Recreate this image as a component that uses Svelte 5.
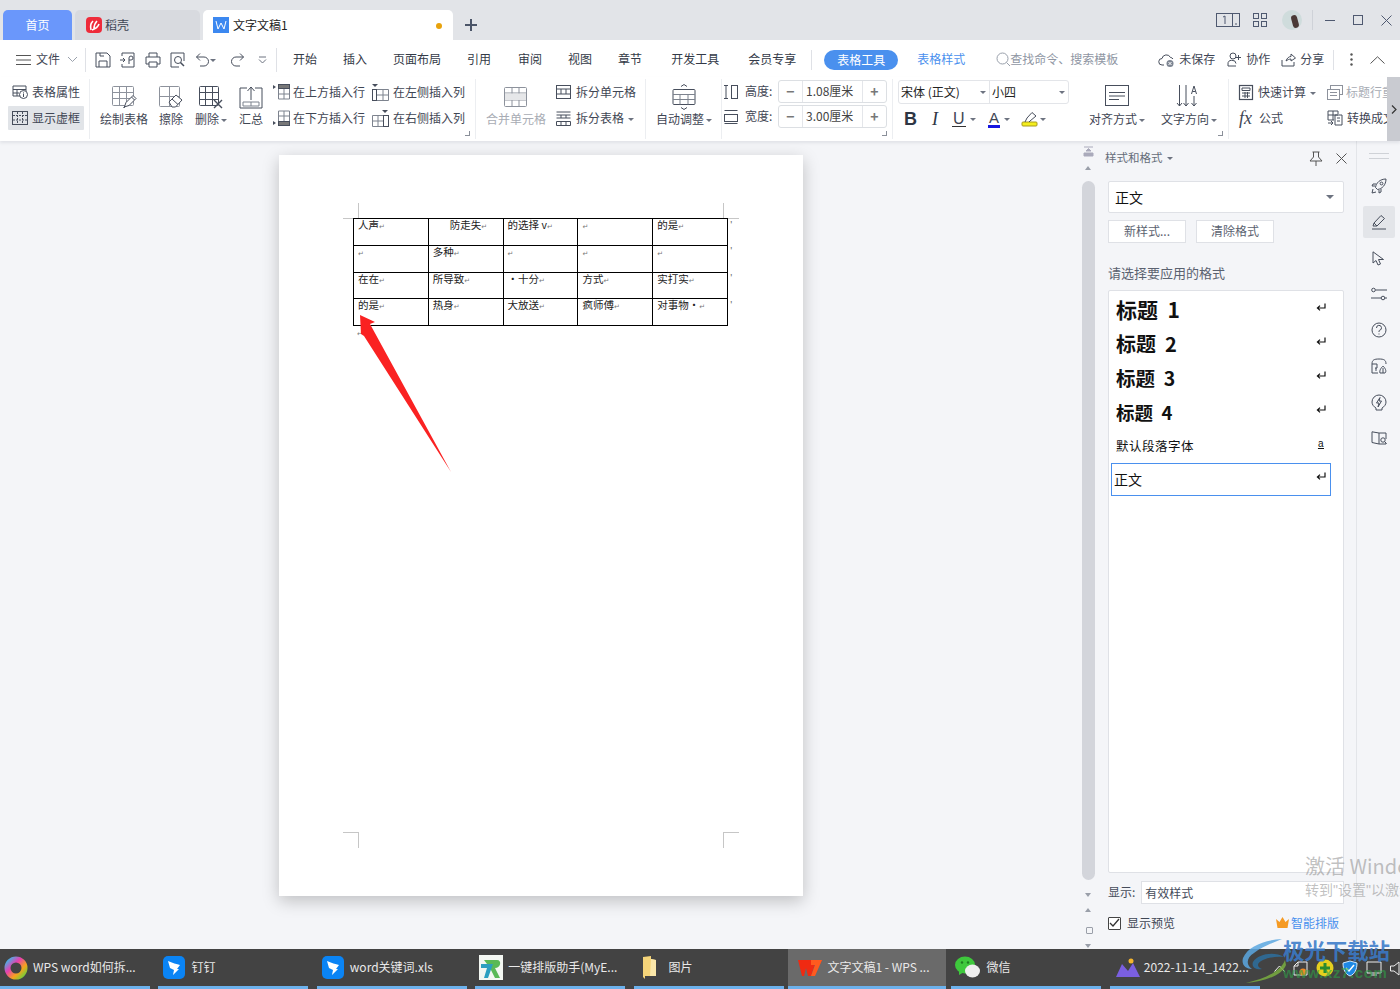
<script>
  const tabs = [
    ["开始", 0], ["插入", 26], ["页面布局", 26], ["引用", 26], ["审阅", 27],
    ["视图", 26], ["章节", 26], ["开发工具", 29], ["会员专享", 29]
  ];
  const rows = [
    [["人声", 0], ["防走失", 1], ["的选择 v", 0], ["", 0], ["的是", 0]],
    [["", 0], ["多种", 0], ["", 0], ["", 0], ["", 0]],
    [["在在", 0], ["所导致", 0], ["·十分", 0], ["方式", 0], ["实打实", 0]],
    [["的是", 0], ["热身", 0], ["大放送", 0], ["疯师傅", 0], ["对事物·", 0]]
  ];
  const styles = [
    { name: "标题", num: "1", cls: "h1" },
    { name: "标题", num: "2", cls: "h2" },
    { name: "标题", num: "3", cls: "h3" },
    { name: "标题", num: "4", cls: "h4" }
  ];
  const tasks = [
    { label: "WPS word如何拆...", icon: "wheel" },
    { label: "钉钉", icon: "ding" },
    { label: "word关键词.xls", icon: "ding" },
    { label: "一键排版助手(MyE...", icon: "r" },
    { label: "图片", icon: "folder" },
    { label: "文字文稿1 - WPS ...", icon: "wps", active: true },
    { label: "微信", icon: "wechat" }
  ];
</script>

{#snippet grid(x, y, w, h, cx, cy)}
  <rect {x} {y} width={w} height={h} rx="1" />
  {#each cx as c}<path d="M{c} {y}V{y + h}" />{/each}
  {#each cy as c}<path d="M{x} {c}H{x + w}" />{/each}
{/snippet}

{#snippet ret()}
  <svg class="ret" width="10" height="9" viewBox="0 0 10 9"><path d="M9 0.5V5H2M4 2.6L1.4 5L4 7.4" /></svg>
{/snippet}

<div class="app">
  <header class="tabbar">
    <div class="tab home">首页</div>
    <div class="tab shell">
      <svg width="16" height="16" viewBox="0 0 16 16"><rect width="16" height="16" rx="4" fill="#ee2b3a" stroke="none" /><path d="M5 13C4 9 5 6 7 4M8 12C8 9 9 6 11 4M6 13C9 12 12 10 13 7" stroke="#fff" stroke-width="1.6" /></svg>
      <span>稻壳</span>
    </div>
    <div class="tab doc">
      <svg width="16" height="16" viewBox="0 0 16 16"><rect width="16" height="16" fill="#3c88f0" stroke="none" /><path d="M3 4L5 12L8 6L11 12L13 4" stroke="#fff" /></svg>
      <span>文字文稿1</span>
      <i class="dot"></i>
    </div>
    <svg class="plus" width="14" height="14" viewBox="0 0 14 14"><path d="M7 1V13M1 7H13" stroke-width="2" stroke="#4b5568" /></svg>
    <div class="winctl">
      <svg width="24" height="14" viewBox="0 0 24 14"><rect x="0.5" y="0.5" width="23" height="13" /><path d="M16.5 0.5V13.5M19 11H21" /><path d="M7 4L9 3V11" /></svg>
      <svg class="apps" width="14" height="14" viewBox="0 0 14 14"><rect x="0.5" y="0.5" width="5" height="5" /><rect x="8.5" y="0.5" width="5" height="5" /><rect x="0.5" y="8.5" width="5" height="5" /><rect x="8.5" y="8.5" width="5" height="5" /></svg>
      <div class="avatar"><i></i></div>
      <b class="vr"></b>
      <svg class="min" width="10" height="11" viewBox="0 0 10 11"><path d="M0 5.5H10" /></svg>
      <svg class="max" width="10" height="10" viewBox="0 0 10 10"><rect x="0.5" y="0.5" width="9" height="9" /></svg>
      <svg class="cls" width="11" height="11" viewBox="0 0 11 11"><path d="M0.5 0.5L10.5 10.5M10.5 0.5L0.5 10.5" /></svg>
    </div>
  </header>

  <nav class="menu">
    <svg class="burger" width="16" height="12" viewBox="0 0 16 12"><path d="M0 1.5H15M0 6H15M0 10.5H15" /></svg>
    <span class="file">文件</span>
    <svg class="chev" width="11" height="7" viewBox="0 0 11 7"><path d="M1 1L5.5 5.5L10 1" stroke="#9aa1ac" /></svg>
    <b class="vr v1"></b>
    <div class="qa">
      <svg width="16" height="16" viewBox="0 0 16 16"><path d="M1 1H12L15 4V15H1ZM4 15V9H12V15M5 1V4H9" /></svg>
    </div>
    <div class="qa">
      <svg width="17" height="16" viewBox="0 0 17 16"><path d="M3 4V1H15V15H3V12M1 8H6M4 6L6 8L4 10M10 12V6A2 2 0 1 1 12 8H10" /></svg>
    </div>
    <div class="qa">
      <svg width="16" height="16" viewBox="0 0 16 16"><path d="M4 5V1H12V5M4 12H1V5H15V12H12M4 10H12V15H4Z" /></svg>
    </div>
    <div class="qa">
      <svg width="16" height="16" viewBox="0 0 16 16"><path d="M14 9V1H1V15H9" /><circle cx="8" cy="8" r="3.5" /><path d="M10.5 10.5L14 14" stroke-width="1.5" /></svg>
    </div>
    <div class="qa undo">
      <svg width="15" height="14" viewBox="0 0 15 14"><path d="M5 0.5L1.5 4L5 7.5M1.5 4H9A4.5 4.5 0 0 1 9 13H5" /></svg>
      <i class="caret"></i>
    </div>
    <div class="qa redo">
      <svg width="15" height="14" viewBox="0 0 15 14"><path d="M10 0.5L13.5 4L10 7.5M13.5 4H6A4.5 4.5 0 0 0 6 13H10" /></svg>
    </div>
    <div class="qa more">
      <svg width="9" height="8" viewBox="0 0 9 8"><path d="M1 1H8M1 3.5L4.5 7L8 3.5" /></svg>
    </div>
    <b class="vr v2"></b>
    <div class="mtabs">
      {#each tabs as [t, m]}
        <span style:margin-left="{m}px">{t}</span>
      {/each}
    </div>
    <b class="vr v3"></b>
    <span class="pill">表格工具</span>
    <span class="link">表格样式</span>
    <div class="search">
      <svg width="15" height="15" viewBox="0 0 15 15"><circle cx="6.5" cy="6.5" r="5.5" /><path d="M10.5 10.5L14 14" /></svg>
      <span>查找命令、搜索模板</span>
    </div>
    <div class="act a1">
      <svg width="19" height="16" viewBox="0 0 19 16"><path d="M6 13H4A3 3 0 0 1 4 6.5A4.5 4.5 0 0 1 12.5 5.5A3 3 0 0 1 15 7" /><circle cx="12" cy="11.5" r="3.5" fill="#7d8592" stroke="none" /><path d="M10.5 10L13.5 13M13.5 10L10.5 13" stroke="#fff" /></svg>
      <span>未保存</span>
    </div>
    <div class="act a2">
      <svg width="15" height="15" viewBox="0 0 15 15"><circle cx="6" cy="4" r="3" /><path d="M1 14V12A4 3.5 0 0 1 9 11.5M1 14H9M11.5 3V8M9 5.5H14" /></svg>
      <span>协作</span>
    </div>
    <div class="act a3">
      <svg width="15" height="15" viewBox="0 0 15 15"><path d="M1 8V14H13V10M5 9C6 6 8 4.5 10 4.5V2L14.5 6L10 9V7C8 7 6.5 8 5 9Z" /></svg>
      <span>分享</span>
    </div>
    <b class="vr v4"></b>
    <svg class="dots" width="3" height="13" viewBox="0 0 3 13"><circle cx="1.5" cy="1.5" r="1.2" fill="#555" stroke="none" /><circle cx="1.5" cy="6.5" r="1.2" fill="#555" stroke="none" /><circle cx="1.5" cy="11.5" r="1.2" fill="#555" stroke="none" /></svg>
    <svg class="collapse" width="15" height="8" viewBox="0 0 15 8"><path d="M0.5 7.5L7.5 0.8L14.5 7.5" /></svg>
  </nav>

  <section class="ribbon">
    <div class="rg g1">
      <div class="smalls">
        <div class="sm">
          <svg width="16" height="14" viewBox="0 0 16 14"><path d="M8 11H1V1H14V6M1 4.5H14M5 4.5V11M1 8H7" /><circle cx="11.5" cy="9.5" r="4" /><path d="M11.5 8.5V12M11.5 6.8V7.6" /></svg>
          <span>表格属性</span>
        </div>
        <div class="sm on">
          <svg width="16" height="14" viewBox="0 0 16 14"><rect x="0.5" y="0.5" width="15" height="13" /><path d="M1 4.5H15M1 9H15M5.5 1V13M10.5 1V13" stroke-dasharray="2 1" /></svg>
          <span>显示虚框</span>
        </div>
      </div>
    </div>

    <div class="rg g2">
      <div class="big" style:width="48px">
        <svg width="24" height="24" viewBox="0 0 24 24" class="soft">
          {@render grid(0.5, 1.5, 21, 19, [7.5, 14.5], [7.5, 13.5])}
          <path class="dk" d="M12 23L14 17.5L21 10.5L24 13.5L17 20.5L12 22ZM19.5 12L22.5 15" />
        </svg>
        <span>绘制表格</span>
      </div>
      <div class="big" style:width="24px">
        <svg width="25" height="24" viewBox="0 0 25 24" class="soft">
          {@render grid(0.5, 1.5, 20, 20, [10.5], [11.5])}
          <path class="dk" d="M10 17L17 10L23 15L16.5 22H13ZM13 14L19 19.5" />
        </svg>
        <span>擦除</span>
      </div>
      <div class="big" style:width="34px">
        <svg width="24" height="24" viewBox="0 0 24 24">
          {@render grid(0.5, 1.5, 19, 19, [6.5, 13.5], [7.5, 14.5])}
          <path d="M15 15L23 23M23 15L15 23" fill="#fff" stroke-width="1.4" />
        </svg>
        <span>删除<i class="caret"></i></span>
      </div>
      <div class="big" style:width="24px">
        <svg width="24" height="24" viewBox="0 0 24 24">
          <path d="M8 3H1V23H23V3H16M12 15V2M8.5 6L12 2L15.5 6" />
          <path class="soft2" d="M4 17H20V21H4ZM12 17V21" />
        </svg>
        <span>汇总</span>
      </div>
      <div class="smalls c1">
        <div class="sm">
          <svg width="17" height="16" viewBox="0 0 17 16"><path class="fl" d="M0 1L3 3L0 5Z" /><rect x="5.5" y="0.5" width="11" height="4" fill="#777" /><path d="M5.5 5V15H16.5V5M11 5V15M5.5 10H16.5" class="soft2" /></svg>
          <span>在上方插入行</span>
        </div>
        <div class="sm">
          <svg width="17" height="16" viewBox="0 0 17 16"><path class="fl" d="M0 11L3 13L0 15Z" /><rect x="5.5" y="11.5" width="11" height="4" fill="#777" /><path d="M5.5 11V1H16.5V11M11 1V11M5.5 6H16.5" class="soft2" /></svg>
          <span>在下方插入行</span>
        </div>
      </div>
      <div class="smalls c2">
        <div class="sm">
          <svg width="17" height="17" viewBox="0 0 17 17"><path class="fl" d="M0 0H6L3 3Z" /><rect x="0.5" y="5.5" width="4" height="11" /><path d="M5 5.5H16.5V16.5H5M11 5.5V16.5M5 11H16.5" class="soft2" /></svg>
          <span>在左侧插入列</span>
        </div>
        <div class="sm">
          <svg width="17" height="17" viewBox="0 0 17 17"><path class="fl" d="M10 0H16L13 3Z" /><rect x="11.5" y="5.5" width="5" height="11" /><path d="M11 5.5H0.5V16.5H11M6 5.5V16.5M1 11H11" class="soft2" /></svg>
          <span>在右侧插入列</span>
        </div>
      </div>
      <i class="launch"></i>
    </div>

    <div class="rg g3">
      <div class="big off" style:width="60px">
        <svg width="24" height="24" viewBox="0 0 24 24" class="soft">
          {@render grid(0.5, 2.5, 22, 19, [8, 15], [8, 15])}
          <rect x="1" y="8.5" width="21" height="6.5" fill="#e6e7e9" stroke="none" />
        </svg>
        <span>合并单元格</span>
      </div>
      <div class="smalls c3">
        <div class="sm">
          <svg width="15" height="14" viewBox="0 0 15 14"><rect x="0.5" y="0.5" width="14" height="13" /><path d="M1 4H14M1 9H14M5 4V9M10 4V9" /></svg>
          <span>拆分单元格</span>
        </div>
        <div class="sm">
          <svg width="15" height="15" viewBox="0 0 15 15"><path d="M0.5 1H14.5M0.5 4H14.5M0.5 7H14.5M0.5 10.5H14.5V14.5H0.5ZM5 10.5V14.5M10 10.5V14.5M5 4V7M10 4V7" /></svg>
          <span>拆分表格<i class="caret"></i></span>
        </div>
      </div>
    </div>

    <div class="rg g4">
      <div class="big" style:width="58px">
        <svg width="24" height="26" viewBox="0 0 24 26">
          <path d="M9 2.5L12 0.5L15 2.5M9 23.5L12 25.5L15 23.5" />
          <rect x="1" y="5.5" width="22" height="15" rx="1" />
          <path class="soft2" d="M1 10.5H23M1 15.5H23M8 10.5V20.5M16 10.5V20.5" />
        </svg>
        <span>自动调整<i class="caret"></i></span>
      </div>
    </div>

    <div class="rg g5">
      <div class="dim">
        <svg width="14" height="14" viewBox="0 0 14 14"><path d="M0 0.5H4M0 13.5H4M2 0.5V13.5" /><rect x="7.5" y="0.5" width="6" height="13" /></svg>
        <span>高度:</span>
        <div class="step"><b>−</b><em>1.08厘米</em><b>+</b></div>
      </div>
      <div class="dim">
        <svg width="14" height="14" viewBox="0 0 14 14"><path d="M0.5 0.5H13.5" /><rect x="0.5" y="4.5" width="13" height="7" /><path d="M0.5 13.5H13.5" /></svg>
        <span>宽度:</span>
        <div class="step"><b>−</b><em>3.00厘米</em><b>+</b></div>
      </div>
      <i class="launch"></i>
    </div>

    <div class="rg g6">
      <div class="fontcol">
        <div class="fontsel">
          <div class="fn">宋体 (正文)<i class="caret"></i></div>
          <div class="fs">小四<i class="caret"></i></div>
        </div>
        <div class="fmts">
          <b class="bold">B</b>
          <i class="ital">I</i>
          <div class="fm u"><span>U</span><i class="caret"></i></div>
          <div class="fm col"><span>A</span><i class="caret"></i></div>
          <div class="fm hl">
            <svg width="16" height="16" viewBox="0 0 16 16"><rect x="0" y="11" width="15" height="4" rx="1" fill="#f4ee1c" stroke="#a79a1e" /><path d="M3 11L5 7L10 1.5L14 5L8 10L7 11" /></svg>
            <i class="caret"></i>
          </div>
        </div>
      </div>
      <div class="big al" style:width="58px">
        <svg width="24" height="24" viewBox="0 0 24 24"><rect x="0.5" y="0.5" width="23" height="20" /><path d="M4 7.5H20M4 11H20M4 14.5H14" /></svg>
        <span>对齐方式<i class="caret"></i></span>
      </div>
      <div class="big dir" style:width="58px">
        <svg width="22" height="24" viewBox="0 0 22 24"><path d="M1.5 0V21M-1 18L1.5 21L4 18M8 0V21M5.5 18L8 21L10.5 18M16 11V21M13.5 18L16 21L18.5 18M13.5 9L16 1L18.5 9M14.5 6.5H17.5" /></svg>
        <span>文字方向<i class="caret"></i></span>
      </div>
      <i class="launch"></i>
    </div>

    <div class="rg g7">
      <div class="smalls">
        <div class="sm">
          <svg width="14" height="15" viewBox="0 0 14 15"><rect x="0.5" y="0.5" width="13" height="14" stroke-width="1.2" /><path d="M3 3H11V5.5H3ZM3 8H11M3 11H11M6 7V13M8.5 7V13" /></svg>
          <span>快速计算<i class="caret"></i></span>
        </div>
        <div class="sm">
          <em class="fx">fx</em>
          <span>公式</span>
        </div>
      </div>
      <div class="smalls c7">
        <div class="sm off">
          <svg width="16" height="15" viewBox="0 0 16 15" class="soft"><rect x="3.5" y="0.5" width="12" height="9" /><rect x="0.5" y="4.5" width="12" height="10" fill="#fff" /><path d="M3 7.5H10M3 10.5H10" /></svg>
          <span>标题行重复</span>
        </div>
        <div class="sm">
          <svg width="17" height="16" viewBox="0 0 17 16"><path d="M7 10H1V1H11V4M1 5H11M6 1V10M8 5H15V15H8ZM10 8H13M10 11H13M1 13H6M4 11L6 13L4 15" /></svg>
          <span>转换成文本</span>
        </div>
      </div>
    </div>
    <div class="rnext">
      <svg width="6" height="9" viewBox="0 0 6 9"><path d="M1 0.5L5 4.5L1 8.5" stroke="#333" stroke-width="1.2" /></svg>
    </div>
  </section>

  <main class="main">
    <div class="canvas">
      <article class="page">
        <i class="crop tl"></i><i class="crop tr"></i><i class="crop bl"></i><i class="crop br"></i>
        <table>
          <tbody>
            {#each rows as row, r}
              <tr>
                {#each row as [txt, indent]}
                  <td class:ind={indent}>{txt}<span class="pm">↵</span></td>
                {/each}
                <td class="eor">'</td>
              </tr>
            {/each}
          </tbody>
        </table>
        <div class="after"><span class="pm">↵</span></div>
      </article>
      <svg class="arrow" width="110" height="175" viewBox="0 0 110 175">
        <path d="M10 10L25 17L20 19L101 167L14 31L11 29Z" />
      </svg>
    </div>

    <div class="vscroll">
      <svg class="sb-top" width="11" height="11" viewBox="0 0 11 11"><path d="M1 1H10M3 5L5.5 2.5L8 5ZM1 7H10V10H1Z" fill="#aab" stroke="#aab" /></svg>
      <i class="tri up"></i>
      <div class="thumb"></div>
      <i class="tri dn"></i>
      <i class="tri up u2"></i>
      <i class="circ"></i>
      <i class="tri dn d2"></i>
    </div>

    <aside class="panel">
      <div class="ptitle">
        <span>样式和格式<i class="caret"></i></span>
        <svg class="pin" width="14" height="15" viewBox="0 0 14 15"><path d="M3.5 1H10.5M4.5 1V6L1 10H13L9.5 6V1M7 10V15" /></svg>
        <svg class="x" width="11" height="11" viewBox="0 0 11 11"><path d="M0.5 0.5L10.5 10.5M10.5 0.5L0.5 10.5" /></svg>
      </div>
      <div class="cursel"><span>正文</span><i class="caret big-c"></i></div>
      <div class="btns"><button>新样式...</button><button>清除格式</button></div>
      <p class="hint">请选择要应用的格式</p>
      <div class="slist">
        {#each styles as s}
          <div class="sitem {s.cls}"><span>{s.name}&nbsp; {s.num}</span>{@render ret()}</div>
        {/each}
        <div class="sitem def"><span>默认段落字体</span><u>a</u></div>
        <div class="sitem cur"><span>正文</span>{@render ret()}</div>
      </div>
      <div class="show">
        <label for="sel">显示:</label>
        <div id="sel" class="showsel">有效样式</div>
      </div>
      <div class="prev">
        <span class="chk"><svg width="11" height="10" viewBox="0 0 11 10"><path d="M1 5L4 8L10 1" stroke="#333" stroke-width="1.3" /></svg></span>
        <span>显示预览</span>
        <span class="smart">
          <svg width="13" height="11" viewBox="0 0 13 11"><path d="M0 2L3.5 5L6.5 0L9.5 5L13 2L11.5 11H1.5Z" fill="#f59a23" stroke="none" /></svg>
          智能排版
        </span>
      </div>
    </aside>

    <div class="rail">
      <i class="grip"></i>
      <div class="ri">
        <svg width="16" height="16" viewBox="0 0 16 16"><path d="M6 11L4.5 9.5C5 5 9 1 15 1C15 7 11 11 6.5 11.5ZM5 6H2L1 8H4M10 11V14L8 15V12M2 11L1 15L5 14" /><circle cx="10.5" cy="5.5" r="1.4" /></svg>
      </div>
      <div class="ri on">
        <svg width="16" height="16" viewBox="0 0 16 16"><path d="M1 15H15M2 12L3 9L10 1.5L13.5 4.5L6 12ZM3 9L6 12" /></svg>
      </div>
      <div class="ri">
        <svg width="13" height="15" viewBox="0 0 13 15"><path d="M1 0.8V12L4 9.5L6 14L8.5 13L6.5 8.5H11.5Z" /></svg>
      </div>
      <div class="ri">
        <svg width="16" height="14" viewBox="0 0 16 14"><circle cx="2.5" cy="3" r="1.8" /><path d="M4.5 3H16M0 11H10" /><circle cx="12" cy="11" r="1.8" /><path d="M14 11H16" /></svg>
      </div>
      <div class="ri">
        <svg width="16" height="16" viewBox="0 0 16 16"><circle cx="8" cy="8" r="7" /><path d="M5.5 6A2.5 2.5 0 1 1 8.5 8.3C8 8.6 8 9 8 10M8 11.5V12.5" /></svg>
      </div>
      <div class="ri">
        <svg width="16" height="16" viewBox="0 0 16 16"><path d="M1 6C1 2 3 1 8 1C13 1 15 2 15 6M1 6V15H7M1 6H6V10H4M5 10V13" /><path d="M9 15C8 12 11 9 12 8C14 10 16 13 14 15ZM12 10V15" /></svg>
      </div>
      <div class="ri">
        <svg width="16" height="17" viewBox="0 0 16 17"><path d="M5 14C2.5 12.5 1 10.5 1 8A7 7 0 0 1 15 8C15 10.5 13.5 12.5 11 14V16H5Z" /><path d="M9 3.5L5.5 9H8L7 13L10.5 7H8Z" /></svg>
      </div>
      <div class="ri">
        <svg width="16" height="14" viewBox="0 0 16 14"><path d="M8 2L1 0.8V11.5L8 13V2H15V8M15 12V13H8" /><circle cx="12" cy="9" r="2.2" /><path d="M13.6 10.6L15.5 12.5" /></svg>
      </div>
    </div>
  </main>

  <footer class="taskbar">
    {#each tasks as t}
      <div class="task" class:active={t.active}>
        <span class="ticon">
          {#if t.icon === "wheel"}
            <svg width="24" height="24" viewBox="0 0 24 24"><circle cx="12" cy="12" r="8.5" stroke="url(#w)" stroke-width="6" /><defs><linearGradient id="w" x1="0" y1="0" x2="1" y2="1"><stop offset="0" stop-color="#3fb7e8" /><stop offset=".35" stop-color="#e83fb0" /><stop offset=".7" stop-color="#f7a31c" /><stop offset="1" stop-color="#6ccf3a" /></linearGradient></defs></svg>
          {:else if t.icon === "ding"}
            <svg width="22" height="23" viewBox="0 0 22 23"><rect width="22" height="23" rx="5" fill="#0a84f5" stroke="none" /><path d="M5 5C9 7 14 8 17 9L14 13H16L10 19L11 14L7 12Z" fill="#fff" stroke="none" /></svg>
          {:else if t.icon === "r"}
            <svg width="24" height="25" viewBox="0 0 24 25"><rect width="24" height="25" fill="#f3f7f2" stroke="none" /><path d="M5 5H18C23 5 22 13 16 13L21 23H16L11 13" fill="#5ab957" stroke="none" /><path d="M2 9H14L9 23H5L8 13H2Z" fill="#2c9fc0" stroke="none" /></svg>
          {:else if t.icon === "folder"}
            <svg width="15" height="23" viewBox="0 0 15 23"><path d="M1 1L9 0V3L14 4V20L3 20V23L1 21Z" fill="#f5d479" stroke="none" /><path d="M9 3L14 4V20H8Z" fill="#fbe7a9" stroke="none" /></svg>
          {:else if t.icon === "wps"}
            <svg width="24" height="20" viewBox="0 0 24 20"><path d="M0 2H24L22 6H17L13 18H10L8 10L6 18H4Z" fill="#f02a12" stroke="none" /><path d="M13 2H24L17 18H13L17 7H13Z" fill="#ff5a1f" stroke="none" /></svg>
          {:else}
            <svg width="25" height="23" viewBox="0 0 25 23"><ellipse cx="10" cy="9" rx="10" ry="8.5" fill="#3ec83c" stroke="none" /><path d="M4 14L4 19L9 16Z" fill="#3ec83c" stroke="none" /><ellipse cx="17.5" cy="15" rx="7.5" ry="6.5" fill="#eee" stroke="none" /><circle cx="7" cy="6.5" r="1.2" fill="#1d7d20" stroke="none" /><circle cx="13" cy="6.5" r="1.2" fill="#1d7d20" stroke="none" /></svg>
          {/if}
        </span>
        <span class="tlabel">{t.label}</span>
      </div>
    {/each}
    <div class="task long">
      <span class="ticon">
        <svg width="24" height="20" viewBox="0 0 24 20"><path d="M0 19L6 6L12 13L17 5L24 19Z" fill="#7a5fe0" stroke="none" /><circle cx="15" cy="3" r="2.5" fill="#f5b52e" stroke="none" /></svg>
      </span>
      <span class="tlabel">2022-11-14_1422...</span>
    </div>
    <div class="tray">
      <svg width="11" height="7" viewBox="0 0 11 7"><path d="M0.5 6.5L5.5 1L10.5 6.5" stroke="#eee" /></svg>
      <svg width="15" height="15" viewBox="0 0 15 15"><path d="M5 1H14V14H1V5ZM5 1V5H1" stroke="#eee" /><circle cx="10" cy="11" r="3.5" fill="#f08a24" stroke="none" /></svg>
      <svg width="18" height="18" viewBox="0 0 18 18"><circle cx="9" cy="9" r="8.5" fill="#e6cf1e" stroke="none" /><path d="M9 4V14M4 9H14" stroke="#2a8a2e" stroke-width="3" /></svg>
      <svg width="16" height="17" viewBox="0 0 16 17"><path d="M8 1L15 3C15 9 13 14 8 16C3 14 1 9 1 3Z" fill="#1e88e5" stroke="#cfe8ff" /><path d="M4 8L7 11L12 5" stroke="#fff" stroke-width="1.5" /></svg>
      <svg width="16" height="15" viewBox="0 0 16 15"><path d="M1 1H15V12H1ZM5 14H11" stroke="#eee" /></svg>
      <svg width="10" height="15" viewBox="0 0 10 15"><path d="M0.5 5H4L9 1V14L4 10H0.5Z" stroke="#eee" /></svg>
    </div>
  </footer>

  <div class="wm-win">
    <div class="w1">激活 Windows</div>
    <div class="w2">转到"设置"以激活 Windows。</div>
  </div>
  <div class="wm-logo">
    <svg width="50" height="46" viewBox="0 0 50 46">
      <path d="M42 1C25 2 8 8 3 20C1 27 6 31 12 31C6 27 6 20 14 15C22 9 32 5 42 1Z" fill="#5aa7e0" stroke="none" opacity=".85" />
      <path d="M44 19C34 13 18 16 13 24C11 29 16 32 22 31C17 29 16 25 23 22C30 19 38 18 44 19Z" fill="#2d6f9e" stroke="none" opacity=".85" />
      <path d="M45 22C41 33 25 41 6 45C22 44 42 38 46 27Z" fill="#79ad3f" stroke="none" opacity=".85" />
    </svg>
    <div class="wm-text">
      <div class="wt1">极光下载站</div>
      <div class="wt2">www.xz7.com</div>
    </div>
  </div>
</div>

<style>
  :global(body) { margin: 0; background: #f4f5f8; }
  .app {
    position: relative;
    width: 1400px;
    height: 989px;
    display: flex;
    flex-direction: column;
    overflow: hidden;
    font: 12px/1.2 "Noto Sans CJK SC", "Noto Sans", sans-serif;
    color: #3f4654;
  }
  svg { fill: none; stroke: #474e5c; stroke-width: 1; flex: none; display: block; overflow: visible; }
  .soft { stroke: #8d929c; }
  .soft .dk, .dk { stroke: #474e5c; fill: #fff; }
  .soft2 { stroke: #7d838e; }
  .fl { fill: #474e5c; stroke: none; }
  .caret {
    display: inline-block;
    width: 0;
    height: 0;
    margin-left: 4px;
    vertical-align: middle;
    border: 3px solid transparent;
    border-top: 3px solid #6d7380;
    border-bottom: 0;
  }
  .vr { display: block; width: 1px; background: #dfe1e6; flex: none; }

  .tabbar {
    flex: none;
    height: 40px;
    background: #e2e4e8;
    display: flex;
    align-items: flex-end;
    padding-left: 3px;
  }
  .tab {
    height: 30px;
    display: flex;
    align-items: center;
    border-radius: 5px 5px 0 0;
    font-size: 12px;
  }
  .home { width: 69px; justify-content: center; background: #6a97fb; color: #fff; }
  .shell { width: 125px; margin-left: 3px; padding-left: 11px; gap: 3px; box-sizing: border-box; background: #d8dadf; }
  .doc { width: 250px; margin-left: 3px; padding-left: 10px; gap: 4px; box-sizing: border-box; background: #fff; color: #222; position: relative; }
  .dot { position: absolute; right: 11px; top: 13px; width: 6px; height: 6px; border-radius: 50%; background: #e8a20c; }
  .plus { margin: 0 0 8px 11px; }
  .winctl { margin-left: auto; height: 40px; display: flex; align-items: center; align-self: flex-start; }
  .winctl svg { stroke: #4f5970; }
  .apps { margin-left: 13px; }
  .avatar { width: 20px; height: 20px; border-radius: 50%; margin-left: 15px; background: #cfdcdc; overflow: hidden; position: relative; }
  .avatar i { position: absolute; left: 10px; top: 5px; width: 6px; height: 13px; background: #4a3a36; border-radius: 3px; transform: rotate(-15deg); }
  .winctl .vr { height: 20px; background: #cfd2d8; margin: 0 12px 0 10px; }
  .winctl .max { margin-left: 18px; }
  .winctl .cls { margin: 0 8px 0 18px; }

  .menu {
    flex: none;
    height: 37px;
    background: #fff;
    display: flex;
    align-items: center;
    padding: 2px 0 0 16px;
    box-sizing: border-box;
    white-space: nowrap;
  }
  .burger { stroke: #555; }
  .file { margin-left: 4px; }
  .chev { margin: 0 7px 0 7px; }
  .v1 { height: 24px; margin-right: 4px; }
  .qa { width: 25px; height: 24px; display: flex; align-items: center; justify-content: center; position: relative; flex: none; }
  .undo { width: 25px; margin-right: 10px; }
  .undo .caret { position: absolute; left: 20px; top: 11px; margin: 0; }
  .more svg { stroke: #6d7380; }
  .v2 { height: 24px; margin-left: 1px; }
  .mtabs { display: flex; margin-left: 16px; color: #333a47; }
  .v3 { height: 20px; margin-left: 15px; }
  .pill { margin-left: 12px; width: 74px; height: 20px; line-height: 20px; text-align: center; border-radius: 10px; background: #4a90ee; color: #fff; }
  .link { margin-left: 19px; color: #4a90ee; }
  .search { margin-left: 31px; display: flex; align-items: center; color: #8f96a3; }
  .search svg { stroke: #99a0ab; margin-right: -1px; }
  .act { display: flex; align-items: center; gap: 2px; }
  .a1 { margin-left: 40px; }
  .a2 { margin-left: 12px; gap: 4px; }
  .a3 { margin-left: 11px; gap: 4px; }
  .v4 { height: 20px; margin-left: 9px; }
  .dots { margin-left: 16px; }
  .collapse { margin-left: 17px; stroke: #555; }

  .ribbon {
    flex: none;
    height: 64px;
    background: #fff;
    display: flex;
    position: relative;
    z-index: 2;
    box-shadow: 0 2px 3px rgba(60, 70, 90, .1);
  }
  .rg { position: relative; height: 60px; margin-top: 2px; box-sizing: border-box; border-right: 1px solid #eceef1; display: flex; align-items: flex-start; flex: none; }
  .smalls { display: grid; grid-template-rows: 26px 26px; flex: none; white-space: nowrap; }
  .sm { display: flex; align-items: center; gap: 4px; height: 26px; }
  .sm.on { background: #e1e4e8; height: 24px; margin-top: 1px; padding: 0 4px; margin-left: -4px; border-radius: 1px; }
  .off { color: #a8acb4; }
  .big { display: flex; flex-direction: column; align-items: center; flex: none; padding-top: 5px; white-space: nowrap; }
  .big svg { height: 26px; }
  .big span { line-height: 18px; }
  .big .caret { margin-left: 2px; }
  .launch { position: absolute; right: 5px; bottom: 3px; width: 4px; height: 4px; border-right: 1px solid #8a8f99; border-bottom: 1px solid #8a8f99; }

  .g1 { width: 90px; padding-left: 12px; }
  .g2 { width: 386px; padding-left: 10px; gap: 11px; }
  .c1 { margin-left: -1px; margin-right: -4px; }
  .c1 .sm { gap: 3px; }
  .g3 { width: 170px; padding-left: 10px; gap: 10px; }
  .c3 .sm { gap: 5px; }
  .g4 { width: 76px; padding-left: 9px; }
  .g5 { width: 171px; padding-left: 2px; display: grid; grid-template-rows: 25px 25px; align-content: start; row-gap: 0; padding-top: 1px; }
  .dim { display: flex; align-items: center; }
  .dim span { margin-left: 7px; width: 33px; }
  .step { display: flex; width: 109px; height: 23px; box-sizing: border-box; border: 1px solid #dcdfe3; border-radius: 3px; align-items: center; }
  .step b { width: 23px; text-align: center; font-weight: 700; font-size: 14px; color: #777; line-height: 21px; border-right: 1px solid #e4e6ea; flex: none; }
  .step b:last-child { border-right: 0; border-left: 1px solid #e4e6ea; }
  .step em { flex: 1; font-style: normal; padding-left: 3px; color: #444; }

  .g6 { width: 336px; padding-left: 5px; }
  .fontcol { width: 171px; flex: none; }
  .fontsel { display: flex; height: 24px; margin-top: 1px; border: 1px solid #e3e5e9; border-radius: 3px; box-sizing: border-box; line-height: 22px; color: #222; }
  .fn { width: 91px; border-right: 1px solid #e3e5e9; padding-left: 2px; position: relative; white-space: nowrap; box-sizing: border-box; }
  .fs { flex: 1; padding-left: 2px; position: relative; }
  .fn .caret, .fs .caret { position: absolute; right: 3px; top: 10px; }
  .fmts { display: flex; align-items: center; height: 28px; margin-top: 1px; padding-left: 6px; }
  .bold { font: 700 18px "Liberation Sans", sans-serif; width: 25px; color: #2e3644; }
  .ital { font: italic 400 18px "Liberation Serif", serif; width: 24px; color: #2e3644; padding-left: 3px; box-sizing: border-box; }
  .fm { display: flex; align-items: center; }
  .u { width: 35px; margin-left: -1px; }
  .u span { font: 400 16px/15px "Liberation Sans", sans-serif; border-bottom: 1px solid #333; padding: 0 1px; }
  .col { width: 34px; margin-left: 1px; }
  .col span { font: 400 15px/15px "Liberation Sans", sans-serif; border-bottom: 3px solid #1616e0; padding: 0 1px; }
  .hl .caret { margin-left: 2px; }
  .al { margin-left: 19px; }
  .dir { margin-left: 14px; }
  .g7 { width: 158px; padding-left: 10px; border-right: 0; overflow: hidden; }
  .g7 .sm { gap: 5px; }
  .fx { font: italic 400 18px/18px "Liberation Serif", serif; color: #3f4654; width: 15px; }
  .c7 { margin-left: 11px; }
  .g7 .c7 .sm { gap: 3px; }
  .rnext { flex: none; width: 13px; height: 64px; margin-top: 0; background: #c9cbd1; display: flex; align-items: center; justify-content: center; }

  .main { flex: 1; min-height: 0; display: flex; background: #f4f5f8; }
  .canvas { width: 1082px; flex: none; position: relative; padding: 14px 0 0 279px; box-sizing: border-box; }
  .page { position: relative; width: 524px; height: 741px; background: #fff; box-shadow: 0 5px 16px rgba(0, 0, 0, .22); padding: 63px 0 0 74px; box-sizing: border-box; }
  .crop { position: absolute; width: 15px; height: 15px; border: 0 solid #c6c6c6; }
  .tl { left: 64px; top: 48px; border-right-width: 1px; border-bottom-width: 1px; }
  .tr { left: 444px; top: 48px; border-left-width: 1px; border-bottom-width: 1px; }
  .bl { left: 64px; top: 677px; border-right-width: 1px; border-top-width: 1px; }
  .br { left: 444px; top: 677px; border-left-width: 1px; border-top-width: 1px; }
  table { border-collapse: collapse; table-layout: fixed; width: 375px; position: relative; background: transparent; font: 10.5px/12px "Noto Sans CJK SC", sans-serif; color: #222; }
  tr { height: 26.75px; }
  td { border: 1.4px solid #000; width: 74.8px; padding: 0 4px; vertical-align: top; white-space: nowrap; box-sizing: border-box; }
  td.ind { padding-left: 21px; }
  td.eor { border: 0; width: 0; padding: 0 0 0 2px; font-size: 9px; color: #666; }
  .pm { font: 7px/12px "DejaVu Sans", sans-serif; color: #777; }
  .after { padding-left: 4px; line-height: 10px; }
  .arrow { position: absolute; left: 350px; top: 164px; }
  .arrow path { fill: #fa2222; stroke: none; }

  .vscroll { width: 15px; flex: none; position: relative; }
  .sb-top { position: absolute; left: 1px; top: 5px; }
  .thumb { position: absolute; left: 0; top: 40px; width: 13px; height: 699px; background: #d3d5db; border-radius: 7px; }
  .tri { position: absolute; left: 3px; width: 0; height: 0; border: 3px solid transparent; }
  .tri.up { top: 25px; border-bottom: 4px solid #9a9fa9; border-top: 0; }
  .tri.dn { top: 752px; border-top: 4px solid #9a9fa9; border-bottom: 0; }
  .tri.u2 { top: 767px; }
  .circ { position: absolute; left: 4px; top: 786px; width: 5px; height: 5px; border: 1px solid #9a9fa9; border-radius: 1px; }
  .tri.d2 { top: 803px; }

  .panel { width: 260px; flex: none; box-sizing: border-box; padding: 0 12px 0 11px; display: flex; flex-direction: column; border-right: 1px solid #e3e5e9; }
  .ptitle { height: 34px; display: flex; align-items: center; color: #666d7a; margin-left: -3px; font-size: 11.5px; }
  .ptitle .pin { margin-left: auto; stroke: #555; }
  .ptitle .x { margin: 0 -3px 0 13px; stroke: #555; }
  .cursel { height: 32px; margin-top: 6px; background: #fff; border: 1px solid #dfe1e6; border-radius: 2px; box-sizing: border-box; padding-left: 6px; display: flex; align-items: center; justify-content: space-between; font-size: 14px; color: #111; }
  .big-c { margin-right: 9px; border-width: 4px; border-top-width: 4px; border-bottom: 0; }
  .btns { display: flex; gap: 10px; margin-top: 7px; }
  .btns button { width: 78px; height: 23px; padding: 0; background: #fff; border: 1px solid #dfe1e6; font: inherit; color: #5b6270; }
  .hint { margin: 21px 0 8px; font-size: 13px; line-height: 18px; color: #5b6270; }
  .slist { height: 583px; box-sizing: border-box; background: #fff; border: 1px solid #dfe1e6; border-radius: 2px; padding: 2px 12px 0 2px; flex: none; font-family: "Noto Sans CJK SC", sans-serif; color: #111; }
  .sitem { display: flex; align-items: center; justify-content: space-between; height: 34px; padding: 0 5px 0 5px; box-sizing: border-box; font-weight: 700; }
  .ret { stroke: #111; stroke-width: 1.2; margin-bottom: 6px; }
  .h1 { font-size: 21px; }
  .h2 { font-size: 20px; }
  .h3 { font-size: 19.5px; }
  .h4 { font-size: 18.5px; }
  .sitem.def { font-weight: 400; font-size: 12.5px; letter-spacing: .5px; }
  .def span { margin-bottom: 1px; }
  .def u { font: 10px/10px "Liberation Sans", sans-serif; margin: 0 2px 4px 0; }
  .sitem.cur { height: 33px; margin-top: 0; border: 1px solid #4a90ee; font-weight: 400; font-size: 14px; padding-left: 2px; padding-right: 4px; }
  .show { display: flex; align-items: center; margin-top: 7px; height: 24px; color: #454c5a; }
  .showsel { margin-left: 6px; flex: 1; height: 23px; line-height: 21px; box-sizing: border-box; padding-left: 3px; background: #fff; border: 1px solid #dfe1e6; }
  .prev { display: flex; align-items: center; margin-top: 7px; height: 24px; }
  .chk { width: 11px; height: 11px; border: 1px solid #444; border-radius: 1px; margin-right: 6px; background: #fff; display: flex; align-items: center; justify-content: center; }
  .smart { margin-left: auto; display: flex; align-items: center; gap: 2px; color: #4a90ee; padding-right: 5px; }

  .rail { flex: 1; display: flex; flex-direction: column; align-items: center; position: relative; }
  .grip { display: block; width: 20px; height: 4px; margin: 12px 0 11px; border-top: 1px solid #cfd2d7; border-bottom: 1px solid #cfd2d7; }
  .ri { width: 32px; height: 32px; margin-bottom: 4px; display: flex; align-items: center; justify-content: center; border-radius: 2px; }
  .ri.on { background: #e3e5e9; }

  .taskbar { flex: none; height: 40px; background: #434343; display: flex; color: #e9e9e9; position: relative; z-index: 3; }
  .task { width: 150px; margin-right: 8.4px; height: 40px; box-sizing: border-box; border-bottom: 3px solid #6cb1ec; display: flex; align-items: center; flex: none; position: relative; white-space: nowrap; }
  .ticon { width: 32px; flex: none; display: flex; justify-content: center; }
  .tlabel { margin-left: 1px; }
  .task:nth-child(5) .tlabel { margin-left: 3px; }
  .task:nth-child(7) .tlabel { margin-left: 3px; }
  .task:first-child .ticon { width: 32px; }
  .task.active { width: 158px; background: #6a6a6a; margin-right: 5px; padding-left: 6px; margin-left: -3.5px; }
  .task.long { margin-left: 0; width: 150px; padding-left: 2px; }
  .task.long .tlabel { margin-left: 0; }
  .tray { position: absolute; left: 1274px; top: 0; height: 38px; display: flex; align-items: center; gap: 8px; }

  .wm-win { position: absolute; left: 1305px; top: 853px; z-index: 4; white-space: nowrap; color: rgba(140, 140, 140, .55); pointer-events: none; }
  .w1 { font-size: 20px; line-height: 26px; }
  .w2 { font: 14px/20px "Liberation Sans", "Noto Sans CJK SC", sans-serif; margin-top: 1px; }
  .wm-logo { position: absolute; left: 1240px; top: 938px; z-index: 5; display: flex; }
  .wm-text { margin-left: -7px; white-space: nowrap; }
  .wt1 { font-size: 21.4px; line-height: 24px; font-weight: 700; color: rgba(58, 122, 200, .9); }
  .wt2 { font: 700 15px/16px "Liberation Sans", sans-serif; color: rgba(46, 160, 70, .6); margin-top: 3px; letter-spacing: .6px; }
</style>
